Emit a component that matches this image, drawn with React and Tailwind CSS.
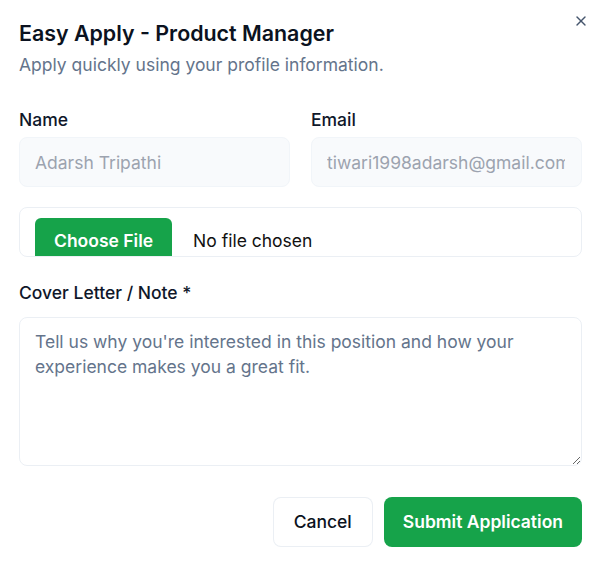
import { X } from "lucide-react";

export default function App() {
  return (
    <div
      className="relative w-[601px] h-[572px] bg-white px-[19px] pt-[18px] text-[#0f172a]"
      style={{ fontFamily: "Inter, 'Noto Sans', sans-serif" }}
    >
      <button className="absolute right-[12px] top-[13px] text-slate-600">
        <X size={16} strokeWidth={2} />
      </button>

      <h2 className="text-[21.4px] font-semibold leading-[30px] text-[#0b1220]">
        Easy Apply - Product Manager
      </h2>
      <p className="mt-[5px] text-[17.5px] leading-6 text-[#64748b]">
        Apply quickly using your profile information.
      </p>

      <div className="mt-[31px] grid grid-cols-2 gap-[21px]">
        <div>
          <label className="block text-[17.5px] font-medium leading-6 mb-[5px]">Name</label>
          <input
            disabled
            value="Adarsh Tripathi"
            className="w-full h-[50px] pl-[15px] pr-4 rounded-lg bg-slate-50 border border-slate-100 text-[17.5px] text-[#9ca3af] outline-none"
          />
        </div>
        <div>
          <label className="block text-[17.5px] font-medium leading-6 mb-[5px]">Email</label>
          <input
            disabled
            value="tiwari1998adarsh@gmail.com"
            className="w-full h-[50px] pl-[15px] pr-4 rounded-lg bg-slate-50 border border-slate-100 text-[17.5px] text-[#9ca3af] outline-none"
          />
        </div>
      </div>

      <div className="mt-5 h-[50px] rounded-lg border border-slate-200/70 overflow-hidden flex items-start pl-[15px]">
        <span className="mt-[10px] h-[46px] px-[19px] flex items-center rounded-md bg-[#16a34a] text-white font-semibold text-[17.5px] shrink-0">
          Choose File
        </span>
        <span className="mt-[10px] h-[46px] flex items-center ml-[21px] text-[17.5px] text-[#111]">
          No file chosen
        </span>
      </div>

      <label className="block mt-6 text-[17.5px] font-medium leading-6">Cover Letter / Note *</label>
      <textarea
        placeholder="Tell us why you're interested in this position and how your experience makes you a great fit."
        className="mt-3 block w-full h-[149px] rounded-lg border border-slate-200/70 px-[15px] py-[11px] text-[17.5px] leading-[25px] placeholder:text-[#64748b] outline-none"
      />

      <div className="mt-[31px] flex justify-end gap-[11px]">
        <button className="h-[50px] px-5 rounded-lg border border-slate-200/70 bg-white text-[17.5px] font-medium text-[#0b1220]">
          Cancel
        </button>
        <button className="h-[50px] px-[19px] rounded-lg bg-[#16a34a] text-white text-[17.5px] font-semibold">
          Submit Application
        </button>
      </div>
    </div>
  );
}
